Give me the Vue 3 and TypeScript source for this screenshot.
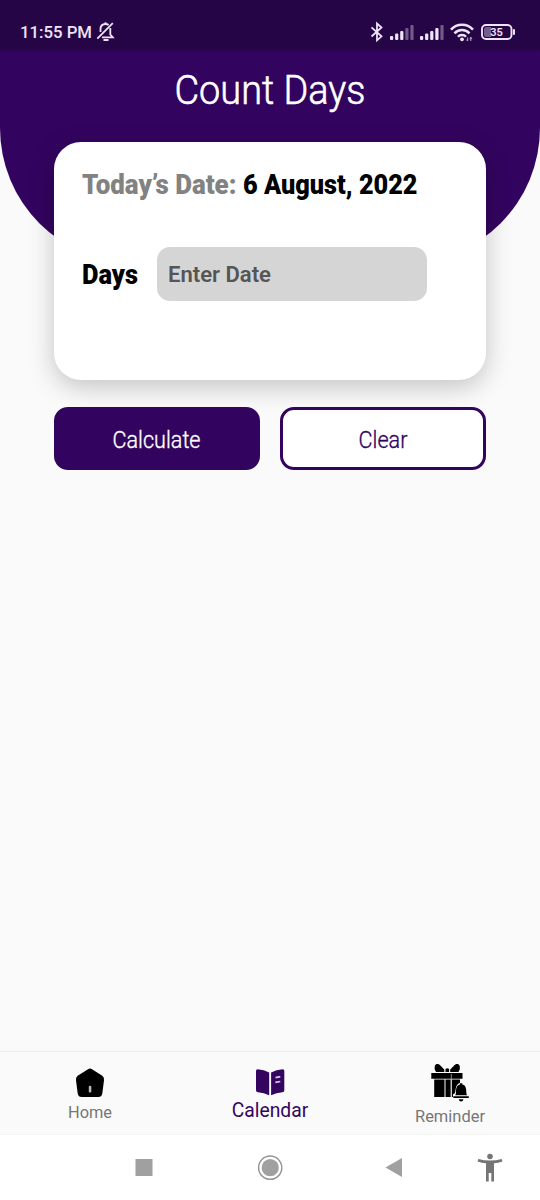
<script setup lang="ts">
import { ref } from 'vue'

type Tab = 'home' | 'calendar' | 'reminder'
const tabs: { id: Tab; label: string; width: number; baseline: number }[] = [
  { id: 'home', label: 'Home', width: 44, baseline: 65.5 },
  { id: 'calendar', label: 'Calendar', width: 76.5, baseline: 65 },
  { id: 'reminder', label: 'Reminder', width: 70, baseline: 70 },
]
const active = ref<Tab>('calendar')
const bars = [4, 6.5, 9, 12, 15]
const signals = [3, 4]
</script>

<template>
  <div class="screen">
    <header class="hero">
      <div class="status">
        <div class="clock">
          <svg width="73" height="24"><text x="0" y="17" textLength="72" lengthAdjust="spacingAndGlyphs">11:55 PM</text></svg>
          <svg class="bell" width="19" height="21" viewBox="0 0 19 21" fill="none" stroke="currentColor" stroke-width="1.8">
            <path d="M4.500 11V8.500C4.500 5 6.500 3 9.500 3c1.300 0 2.300.4 3.100 1M14.300 7v6.500l2.500 2.800H6M1.300 17.600 16.800 2.200M7.500 19h5" />
            <path d="M9.500 1.300V3" />
          </svg>
        </div>
        <div class="indicators">
          <svg class="bt" width="14" height="20" viewBox="0 0 14 20" fill="none" stroke="currentColor" stroke-width="1.8">
            <path d="m1.500 5.300 10 9L7 18.300V1.500l4.500 4-10 9" />
          </svg>
          <svg v-for="count in signals" :key="count" class="signal" width="24" height="16" viewBox="0 0 24 16">
            <rect
              v-for="(h, i) in bars" :key="h" :x="i * 5.1" :y="16 - h" width="3.2" :height="h" rx="1"
              fill="currentColor" :opacity="i < count ? 1 : 0.38"
            />
          </svg>
          <svg class="wifi" width="24" height="19" viewBox="0 0 24 19" fill="none" stroke="currentColor" stroke-width="2.5">
            <path d="M1 6.600C7 .2 17 .2 23 6.600M4.500 10.300c4-4.300 11-4.300 15 0M8 13.800c2-2.300 6-2.300 8 0" />
            <circle cx="12" cy="16.300" r="1.900" fill="currentColor" stroke="none" />
            <path d="M17.700 14.500v3.200m-1.300-1 1.300 1.300M20.800 18v-3.500m-1.200 1.200 1.200-1.200 1.300 1.200" stroke-width=".8" />
          </svg>
          <svg class="battery" width="35" height="16" viewBox="0 0 35 16">
            <rect x="1" y="1" width="29.500" height="14" rx="4" fill="none" stroke="currentColor" stroke-width="1.900" />
            <path d="M5.500 3H10v10H5.500A2.500 2.500 0 0 1 3 10.500v-5A2.500 2.500 0 0 1 5.500 3Z" fill="currentColor" opacity=".4" />
            <rect x="32" y="5" width="2" height="6" rx="1" fill="currentColor" />
            <text x="15.500" y="12" text-anchor="middle">35</text>
          </svg>
        </div>
      </div>
      <svg class="title" role="heading" width="190" height="50"><text x="-.5" y="38" textLength="191" lengthAdjust="spacingAndGlyphs">Count Days</text></svg>
    </header>

    <main>
      <section class="card">
        <div class="today">
          <svg width="155" height="36"><text class="muted" x="0" y="26" textLength="154.500" lengthAdjust="spacingAndGlyphs">Today’s Date:</text></svg>
          <svg width="176" height="36"><text x="0" y="26" textLength="174.500" lengthAdjust="spacingAndGlyphs">6 August, 2022</text></svg>
        </div>
        <div class="field">
          <svg width="57" height="36"><text x="0" y="28" textLength="56" lengthAdjust="spacingAndGlyphs">Days</text></svg>
          <div class="input">
            <svg width="104" height="34"><text x="0" y="25" textLength="103" lengthAdjust="spacingAndGlyphs">Enter Date</text></svg>
          </div>
        </div>
      </section>
      <div class="actions">
        <button class="primary">
          <svg width="88" height="34"><text x="-.5" y="26" textLength="88" lengthAdjust="spacingAndGlyphs">Calculate</text></svg>
        </button>
        <button>
          <svg width="49" height="34"><text x="-.5" y="26" textLength="49" lengthAdjust="spacingAndGlyphs">Clear</text></svg>
        </button>
      </div>
    </main>

    <nav class="tabs">
      <svg
        v-for="tab in tabs" :key="tab.id" class="tab" :class="{ active: active === tab.id }"
        width="180" height="83" @click="active = tab.id"
      >
        <g v-if="tab.id === 'home'" fill="#000">
          <path d="M88 17.200Q90 16 92 17.200L102.300 23.800Q104.500 25.500 104 28.200L102.300 41.500Q101.700 45 98.300 45H81.700Q78.300 45 77.700 41.500L76 28.200Q75.500 25.500 77.700 23.800Z" />
          <rect x="88.800" y="33.800" width="2.500" height="6.800" rx="1" fill="#bbb" />
        </g>
        <g v-else-if="tab.id === 'calendar'">
          <path d="M77.500 17.300Q84 17.500 89.200 20.500V43.200Q84 40.700 78 40.300 76 40.100 76 38.200V19Q76 17.300 77.500 17.300ZM102.800 17.300Q96.300 17.500 91.100 20.500V43.200Q96.300 40.700 102.300 40.300 104.300 40.100 104.300 38.200V19Q104.300 17.300 102.800 17.300Z" fill="#33055f" />
          <path d="m95.500 25.700 4.800-1M95.300 30.300l5-.8" stroke="#d7c9e6" stroke-width="1.700" />
        </g>
        <g v-else fill="#000">
          <path d="M71.300 21h31.200v5.700H71.300ZM74.200 27.500h10.300V45H74.200ZM85.500 27.500h5.200V45H85.500ZM92 27.500h8v3.200q-3.800 1.500-4.300 6.300l-.7 4-2 1.500V45h-1Z" />
          <path d="M76 20q-2.200-3-1.200-6c1-2.600 4-2.500 5.800-.2l3.700 3.700V20ZM98.500 20q2.200-3 1.200-6c-1-2.600-4-2.500-5.800-.2L90.200 17.500V20Z" />
          <path d="M85.500 20v-3q1.800-1.400 3.600 0v3Z" />
          <path d="M95.200 43.300q.8-.8.800-3c0-5.300 1.200-7.200 4-7.800v-1.200h2.300v1.200c2.800.6 4 2.500 4 7.800q0 2.200.8 3ZM93.300 44.300h15.500v1.600H93.300ZM98.700 47.200h4.800q-.6 2.200-2.400 2.200t-2.400-2.200Z" />
          <path d="M91.300 22V45" fill="none" stroke="#aaa" stroke-width=".8" />
        </g>
        <text x="90" :y="tab.baseline" text-anchor="middle" :textLength="tab.width" lengthAdjust="spacingAndGlyphs">{{ tab.label }}</text>
      </svg>
    </nav>
    <footer class="system">
      <svg width="540" height="65" viewBox="0 0 540 65">
        <rect x="135.500" y="24" width="17" height="17" fill="#a0a0a0" />
        <circle cx="270.200" cy="32.700" r="11.600" fill="none" stroke="#969696" stroke-width="1.500" />
        <circle cx="270.200" cy="32.700" r="8.600" fill="#a0a0a0" />
        <path d="m385.500 32.500 16.500-9.500v19Z" fill="#a0a0a0" />
        <g fill="#757575">
          <circle cx="490" cy="21.500" r="2.800" />
          <path d="M478.300 24q11.700 3.200 23.400 0l.8 2.600q-4.500 1.400-8.500 1.700V46.500h-2.700V38h-2.600v8.500H486V28.300q-4-.3-8.500-1.700Z" />
        </g>
      </svg>
    </footer>
  </div>
</template>

<style>
body { margin: 0; }
</style>

<style scoped>
.screen { width: 540px; height: 1200px; display: flex; flex-direction: column; overflow: hidden; background: #fafafa; font-family: Roboto, sans-serif; }
svg { display: block; flex: none; overflow: visible; }
.hero { height: 263px; flex: none; background: #33045f; border-radius: 0 0 135px 135px; }
.status { height: 52px; box-sizing: border-box; padding: 0 24px 0 20px; display: flex; justify-content: space-between; background: linear-gradient(#260546 93%, #33045f); color: #eee4f8; }
.clock { display: flex; padding-top: 21px; gap: 3px; }
.clock text { font-size: 17px; font-weight: 500; fill: currentColor; }
.indicators { display: flex; align-items: flex-start; padding-top: 22px; }
.bt { margin-right: 6px; }
.signal { margin: 2px 6px 0 0; }
.wifi { margin: 1px 7px 0 0; }
.battery { margin-top: 2px; }
.battery text { font-size: 11px; font-weight: 600; fill: currentColor; }
.title { margin: 14px auto 0; }
.title text { font: 300 41px Roboto, sans-serif; fill: #fff; stroke: #fff; stroke-width: .6px; }
main { flex: 1; margin-top: -121px; padding: 0 54px; }
.card { height: 238px; box-sizing: border-box; padding: 26px 28px; border-radius: 27px; background: #fff; box-shadow: 0 7px 26px rgba(0, 0, 0, .22); }
.today { display: flex; gap: 6px; }
.card text { font-size: 27px; font-weight: 900; fill: #000; }
.card .muted { fill: #828282; }
.field { display: flex; align-items: center; gap: 18px; margin-top: 43px; }
.input { width: 270px; height: 54px; box-sizing: border-box; padding: 10px 11px; border-radius: 13px; background: #d5d5d5; }
.card .input text { font-size: 22.500px; font-weight: 600; fill: #555; }
.actions { display: grid; grid-template-columns: 1fr 1fr; gap: 20px; margin-top: 27px; }
button { height: 63px; padding: 0; display: grid; place-items: center; background: #fff; border: 3px solid #33045f; border-radius: 14px; color: #33045f; }
button text { font: 350 24px Roboto, sans-serif; fill: currentColor; stroke: currentColor; stroke-width: .35px; }
.primary { background: #33045f; color: #fff; }
.tabs { display: flex; height: 83px; flex: none; box-shadow: 0 -1px 1px #eee; background: #fafafa; }
.tab text { font-size: 16.500px; fill: #777; }
.tab.active text { font-size: 19.500px; fill: #33055f; }
.system { height: 65px; flex: none; background: #fff; box-shadow: 0 -1px #f4f4f4; }
</style>
